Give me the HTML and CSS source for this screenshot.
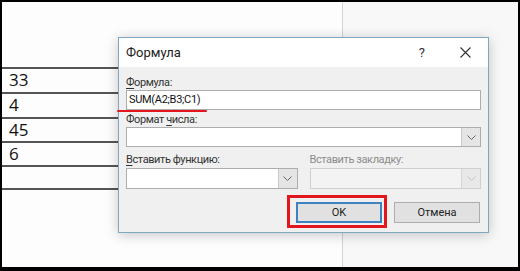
FILE: index.html
```html
<!DOCTYPE html>
<html lang="ru">
<head>
<meta charset="UTF-8">
<title>Формула</title>
<link rel="stylesheet" href="styles.css">
</head>
<body>
  <div class="frame">
    <div class="page">
      <div class="sheet">
        <div class="table">
          <div class="row r1">33</div>
          <div class="row r2">4</div>
          <div class="row r3">45</div>
          <div class="row r4">6</div>
          <div class="row r5"></div>
        </div>
      </div>
      <div class="margin"></div>
    </div>

    <div class="dialog">
      <div class="titlebar">
        <span class="title">Формула</span>
        <span class="help">?</span>
        <span class="close">
          <svg width="11" height="11" viewBox="0 0 11 11"><path d="M0.5 0.5 L10.5 10.5 M10.5 0.5 L0.5 10.5" stroke="#333" stroke-width="1.1" fill="none"/></svg>
        </span>
      </div>
      <div class="body">
        <div class="label first"><u>Ф</u>ормула:</div>
        <div class="field">SUM(A2;B3;C1)</div>

        <div class="label">Формат <u>ч</u>исла:</div>
        <div class="field select">
          <span class="value"></span>
          <span class="arrow"><svg width="9" height="5" viewBox="0 0 9 5"><path d="M0.5 0.5 L4.5 4.5 L8.5 0.5" stroke="#666" fill="none"/></svg></span>
        </div>

        <div class="pair">
          <div class="col">
            <div class="label"><u>В</u>ставить функцию:</div>
            <div class="field select tall">
              <span class="value"></span>
              <span class="arrow"><svg width="9" height="5" viewBox="0 0 9 5"><path d="M0.5 0.5 L4.5 4.5 L8.5 0.5" stroke="#666" fill="none"/></svg></span>
            </div>
          </div>
          <div class="col">
            <div class="label disabled">Вставить закладку:</div>
            <div class="field select tall off">
              <span class="value"></span>
              <span class="arrow"><svg width="9" height="5" viewBox="0 0 9 5"><path d="M0.5 0.5 L4.5 4.5 L8.5 0.5" stroke="#c4c4c4" fill="none"/></svg></span>
            </div>
          </div>
        </div>

        <div class="buttons">
          <button class="btn default">OK</button>
          <button class="btn">Отмена</button>
        </div>
      </div>
    </div>

    <!-- annotation marks drawn over the screenshot -->
    <div class="mark-line"></div>
    <div class="mark-box"></div>
  </div>
</body>
</html>
```

FILE: styles.css
```css
html, body {
  margin: 0;
  padding: 0;
}

body {
  width: 520px;
  height: 271px;
  overflow: hidden;
  background: #000;
}

.frame {
  position: relative;
  box-sizing: border-box;
  width: 520px;
  height: 271px;
  border-style: solid;
  border-color: #000;
  border-width: 2px 2px 4px 2px;
  font-family: Roboto, "Noto Sans", sans-serif;
}

.page {
  display: flex;
  height: 100%;
}

.sheet {
  width: 340px;
  background: #fdfdfd;
  border-right: 1px solid #d4d4d4;
  padding-top: 65px;
}

.margin {
  flex: 1;
  background: #f8f8f8;
}

/* document table behind the dialog */
.table {
  width: 300px;
  border-top: 2px solid #555;
}

.row {
  height: 23px;
  border-bottom: 2px solid #555;
  padding-left: 7px;
  font-family: "Open Sans", sans-serif;
  font-size: 17px;
  line-height: 22px;
  color: #111;
}

.r3, .r4 { height: 22px; }
.r5 { height: 21px; }

/* Word "Формула" dialog */
.dialog {
  position: absolute;
  left: 116px;
  top: 35px;
  width: 369px;
  border: 1px solid #7ea8c2;
  background: #f0f0f0;
  box-shadow: 0 2px 12px rgba(0, 0, 0, 0.22);
  color: #333;
}

.titlebar {
  display: flex;
  align-items: center;
  height: 29px;
  background: #fff;
  padding: 0 17px 0 7px;
}

.title {
  flex: 1;
  font-size: 13px;
  color: #222;
  padding-bottom: 1px;
}

.help {
  font-size: 13px;
  color: #333;
  margin-right: 35px;
}

.close {
  display: flex;
}

.body {
  padding: 8px 7px 9px 7px;
}

.label {
  font-size: 11px;
  line-height: 15px;
  margin-top: 2px;
  color: #333;
  letter-spacing: -0.4px;
}

.label.first {
  margin-top: 0;
}

.label.disabled {
  color: #8c8c8c;
}

.label u {
  text-decoration-thickness: 1px;
  text-underline-offset: 2px;
}

.field {
  box-sizing: border-box;
  height: 20px;
  background: #fff;
  border: 1px solid #adadad;
  font-size: 11px;
  line-height: 18px;
  padding-left: 2px;
  color: #111;
  letter-spacing: -0.3px;
}

.select {
  display: flex;
  padding-left: 0;
}

.select .value {
  flex: 1;
}

.select .arrow {
  width: 18px;
  display: flex;
  align-items: center;
  justify-content: center;
  background: #e5e5e5;
  border-left: 1px solid #c9c9c9;
}

.select.tall {
  height: 21px;
}

.select.off {
  background: #f3f3f3;
  border-color: #cfcfcf;
}

.select.off .arrow {
  background: #e8e8e8;
  border-left-color: #d6d6d6;
}

.pair {
  display: grid;
  grid-template-columns: 1fr 1fr;
  column-gap: 12px;
  margin-top: 5px;
}

.pair .label {
  margin-top: 0;
  margin-bottom: 1px;
}

.buttons {
  display: flex;
  justify-content: flex-end;
  gap: 12px;
  margin-top: 13px;
  padding-right: 1px;
}

.btn {
  box-sizing: border-box;
  width: 86px;
  height: 21px;
  padding: 0;
  background: #e1e1e1;
  border: 1px solid #adadad;
  font-family: Roboto, "Noto Sans", sans-serif;
  font-size: 11px;
  color: #222;
}

.btn.default {
  border: 2px solid #3d83bf;
}

/* red annotation marks */
.mark-line {
  position: absolute;
  left: 115px;
  top: 108px;
  width: 90px;
  height: 2px;
  background: #e3151d;
  border-radius: 1px;
}

.mark-box {
  position: absolute;
  left: 285px;
  top: 193px;
  width: 94px;
  height: 27px;
  border: 3px solid #e3151d;
}
```
